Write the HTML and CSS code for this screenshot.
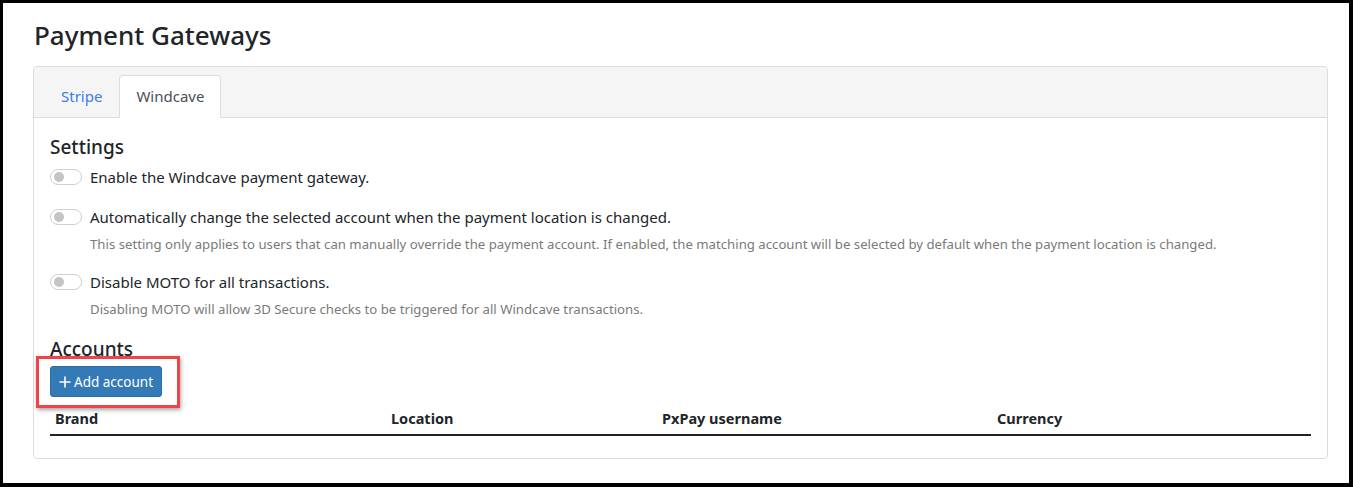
FILE: index.html
```html
<!DOCTYPE html>
<html lang="en">
<head>
    <meta charset="UTF-8">
    <meta name="viewport" content="width=device-width, initial-scale=1.0">
    <title>Payment Gateways</title>
    <link rel="stylesheet" href="styles.css">
</head>
<body>

<div class="frame">
    <h1 class="page-title">Payment Gateways</h1>

    <div class="card">
        <div class="card-header">
            <ul class="tabs">
                <li><a href="#" class="tab">Stripe</a></li>
                <li><a href="#" class="tab active">Windcave</a></li>
            </ul>
        </div>

        <div class="card-body">
            <h2 class="section-title">Settings</h2>

            <div class="setting">
                <label class="setting-label"><span class="toggle"></span>Enable the Windcave payment gateway.</label>
            </div>

            <div class="setting">
                <label class="setting-label"><span class="toggle"></span>Automatically change the selected account when the payment location is changed.</label>
                <div class="help">This setting only applies to users that can manually override the payment account. If enabled, the matching account will be selected by default when the payment location is changed.</div>
            </div>

            <div class="setting">
                <label class="setting-label"><span class="toggle"></span>Disable MOTO for all transactions.</label>
                <div class="help">Disabling MOTO will allow 3D Secure checks to be triggered for all Windcave transactions.</div>
            </div>

            <h2 class="section-title accounts-title">Accounts</h2>
            <div class="add-wrap">
                <button class="btn-primary">
                    <svg class="plus" width="12" height="12" viewBox="0 0 12 12"><path d="M6 0.5v11M0.5 6h11" stroke="#fff" stroke-width="1.6" fill="none"/></svg>
                    Add account
                </button>
                <span class="highlight"></span>
            </div>

            <table class="accounts">
                <thead>
                    <tr>
                        <th class="col-brand">Brand</th>
                        <th class="col-location">Location</th>
                        <th class="col-user">PxPay username</th>
                        <th>Currency</th>
                    </tr>
                </thead>
                <tbody></tbody>
            </table>
        </div>
    </div>
</div>

</body>
</html>
```

FILE: styles.css
```css
html, body {
    margin: 0;
    padding: 0;
}
body {
    font-family: "Noto Sans", "Open Sans", Arial, sans-serif;
    color: #212529;
    background: #000;
}
.frame {
    box-sizing: border-box;
    height: 487px;
    border-style: solid;
    border-color: #000;
    border-width: 3px 4px 4px 3px;
    background: #fff;
    padding: 16px 21px 0 30px;
}
.page-title {
    margin: 0 0 14px 1px;
    font-size: 26px;
    font-weight: 500;
    line-height: 33px;
}

.card {
    border: 1px solid #dcdcdc;
    border-radius: 4px;
}
.card-header {
    background: #f5f5f5;
    border-bottom: 1px solid #dcdcdc;
    padding: 8px 10px 0;
    border-radius: 4px 4px 0 0;
}
.tabs {
    list-style: none;
    margin: 0 0 -1px 0;
    padding: 0;
    display: flex;
}
.tab {
    display: block;
    padding: 0 16px;
    height: 41px;
    line-height: 41px;
    font-size: 15px;
    color: #3a7ee4;
    text-decoration: none;
    border: 1px solid transparent;
    border-radius: 4px 4px 0 0;
}
.tab.active {
    color: #495057;
    background: #fff;
    border-color: #dcdcdc #dcdcdc #fff;
}

.card-body {
    padding: 17px 16px 22px;
}
.section-title {
    margin: 0 0 6px;
    font-size: 19px;
    font-weight: 500;
    line-height: 24px;
}
.setting {
    margin-bottom: 16px;
}
.setting-label {
    display: flex;
    align-items: center;
    height: 24px;
    font-size: 15px;
}
.toggle {
    box-sizing: border-box;
    width: 32px;
    height: 16px;
    border: 1px solid #cfcfcf;
    border-radius: 8px;
    margin-right: 8px;
    position: relative;
    background: #fff;
}
.toggle::after {
    content: "";
    position: absolute;
    left: 3px;
    top: 2px;
    width: 10px;
    height: 10px;
    border-radius: 50%;
    background: #c4c4c4;
}
.help {
    margin: 5px 0 0 40px;
    font-size: 13.2px;
    line-height: 20px;
    color: #7a7a7a;
}
.accounts-title {
    margin-top: 18px;
    margin-bottom: 5px;
}

.add-wrap {
    position: relative;
    display: inline-block;
}
.btn-primary {
    display: flex;
    align-items: center;
    gap: 3px;
    font-family: inherit;
    font-size: 13.5px;
    color: #fff;
    background: #337ab7;
    border: 1px solid #2e6da4;
    border-radius: 3px;
    height: 31px;
    padding: 0 8px;
    cursor: pointer;
}
.highlight {
    position: absolute;
    left: -14px;
    top: -10px;
    right: -18px;
    bottom: -11px;
    border: 3px solid #ee4447;
    box-shadow: 1px 2px 4px rgba(0, 0, 0, 0.35);
    pointer-events: none;
}

.accounts {
    width: 100%;
    border-collapse: collapse;
    margin-top: 4px;
}
.accounts th {
    text-align: left;
    font-size: 14.5px;
    font-weight: 700;
    padding: 7px 5px 6px;
    border-bottom: 2px solid #222;
}
.col-brand {
    width: 326px;
}
.col-location {
    width: 261px;
}
.col-user {
    width: 325px;
}
```
